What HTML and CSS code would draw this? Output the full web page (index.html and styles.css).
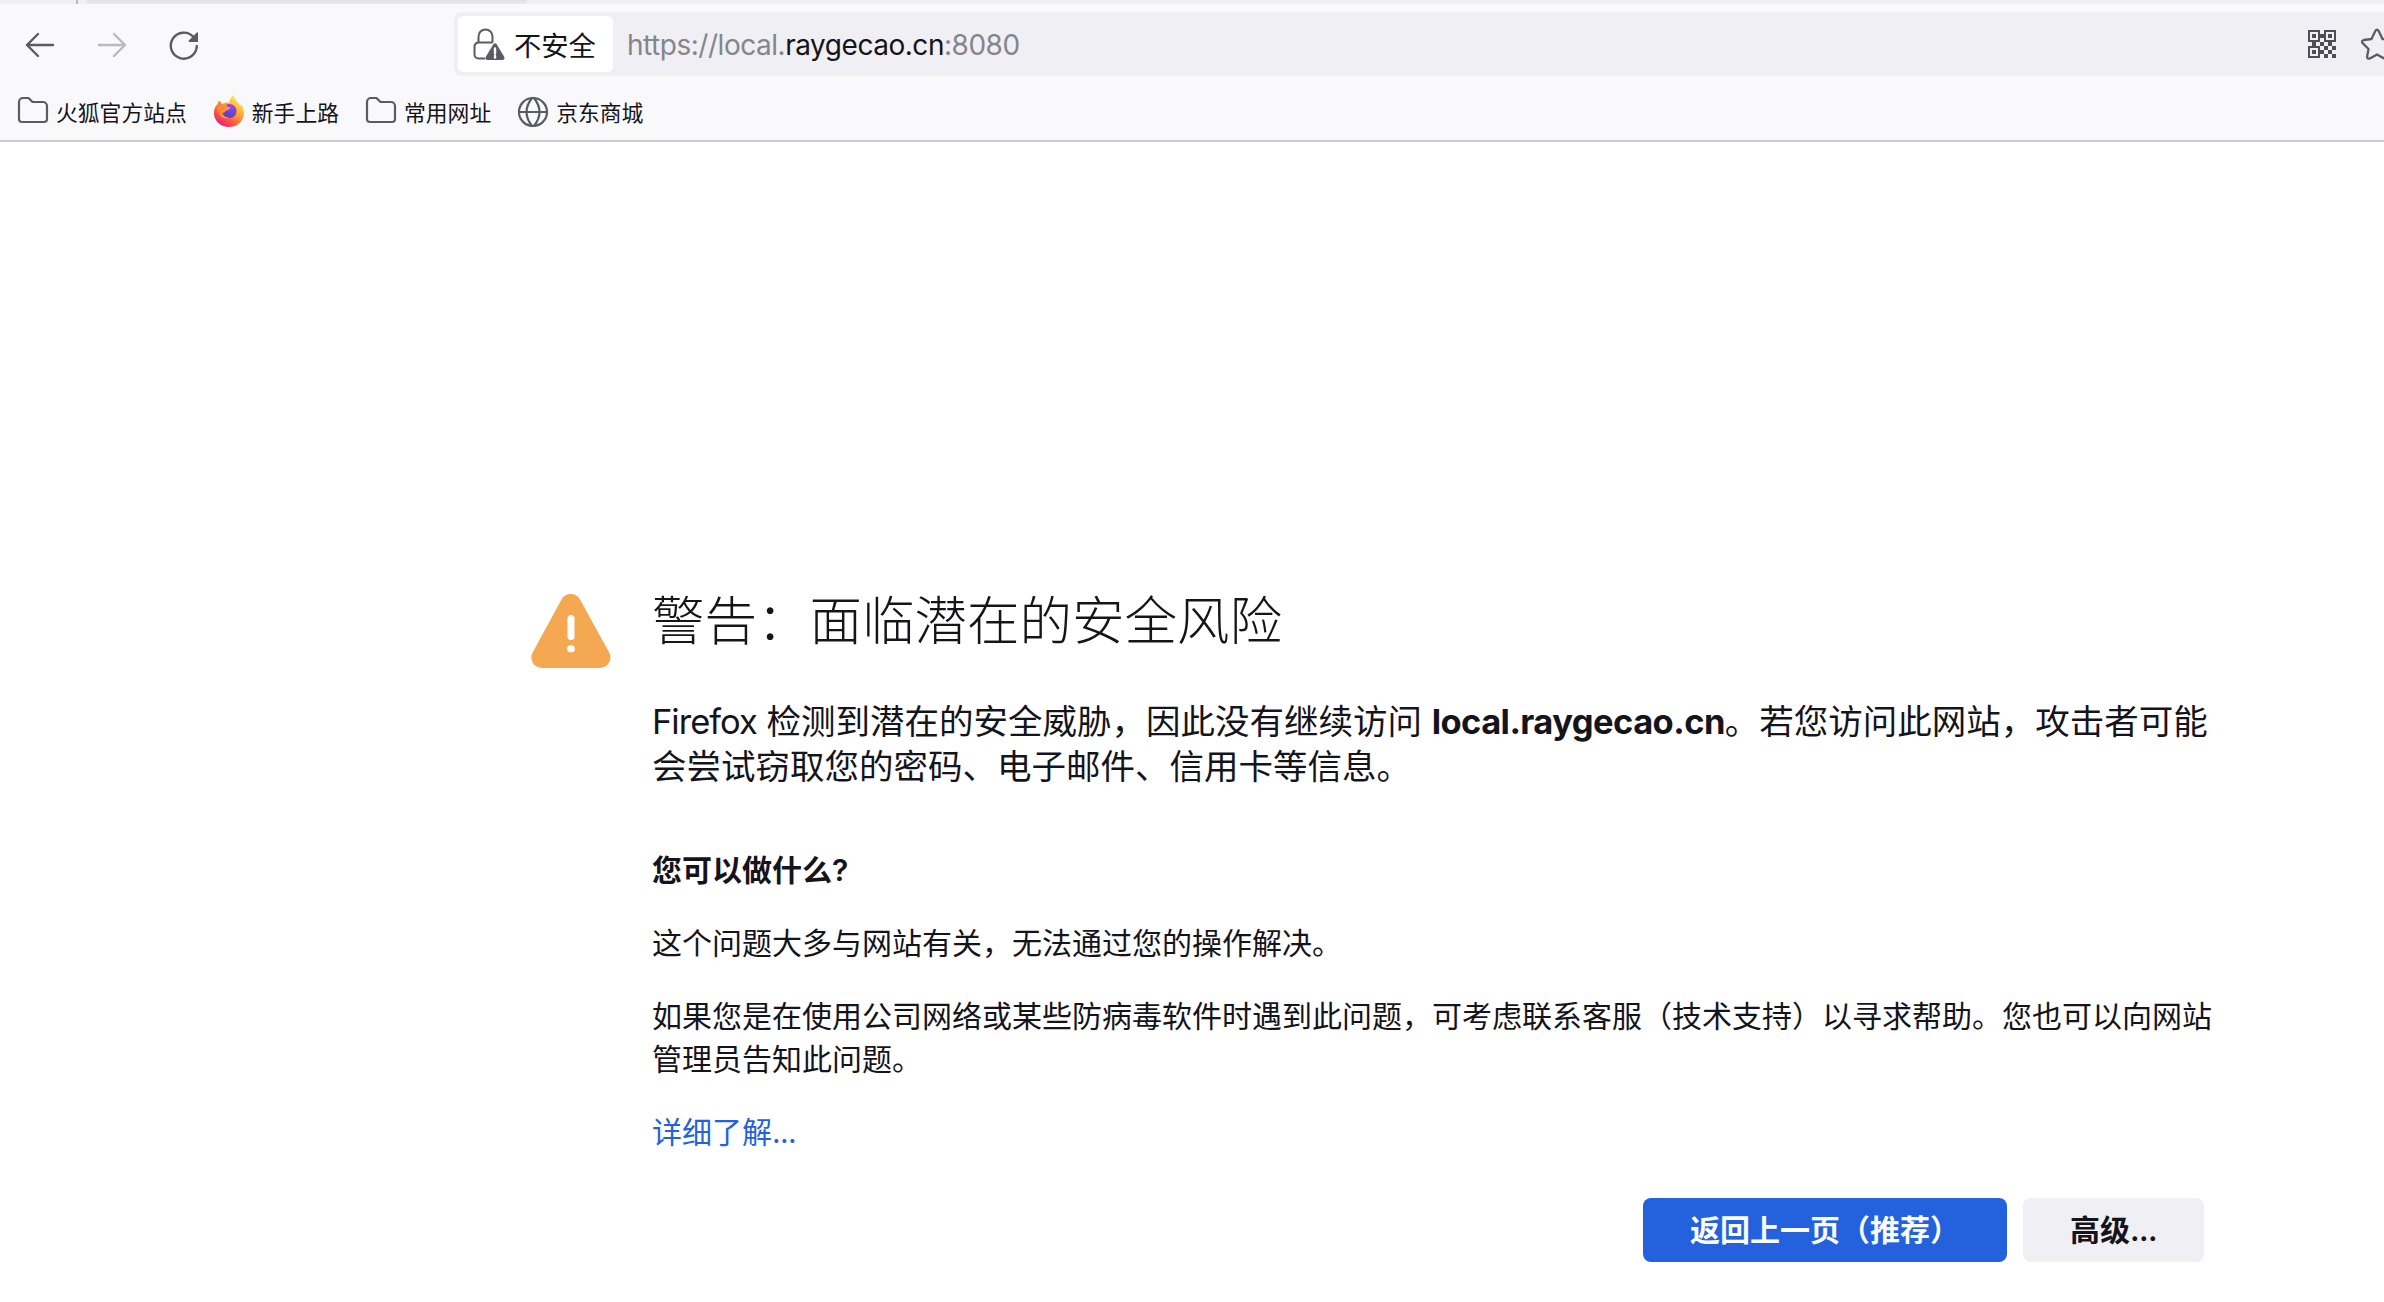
FILE: index.html
```html
<!DOCTYPE html>
<html lang="zh-CN">
<head>
<meta charset="utf-8">
<title>警告：面临潜在的安全风险</title>
<link rel="stylesheet" href="styles.css">
</head>
<body>
<header class="chrome">
  <div class="tabstrip"><span class="tab-separator"></span><span class="tab-shadow"></span></div>
  <div class="navbar">
    <div class="nav-buttons">
      <svg class="nav-icon" viewBox="0 0 32 32"><path d="M29 16H3M14 5L3 16l11 11"/></svg>
      <svg class="nav-icon disabled" viewBox="0 0 32 32"><path d="M3 16h26M18 5l11 11-11 11"/></svg>
      <svg class="nav-icon" viewBox="0 0 32 32"><path d="M28.8 17A13 13 0 1 1 25.5 8"/><path class="solid" d="M30 3.500V13H21.500Q20 12.500 20.800 11.500L28.800 3.500Q29.500 3 30 3.500Z"/></svg>
    </div>
    <div class="urlbar">
      <div class="identity">
        <svg class="lock-icon" viewBox="0 0 32 34"><path d="M5.500 15V9.500a7 7 0 0 1 14 0V15M11.500 31.500H5.500a4 4 0 0 1-4-4V19.500a4 4 0 0 1 4-4H19"/><path class="solid" d="M20.200 17.500q1.800-2.600 3.600 0L31 29.500q1.300 3-1.500 3.500h-15q-2.800-.5-1.500-3.500z"/><path class="mark" d="M22 21.500v5M22 29v1.500"/></svg>
        <span class="identity-label">不安全</span>
      </div>
      <div class="url">https://local.<span class="domain">raygecao.cn</span>:8080</div>
      <div class="page-actions">
        <svg class="qr-icon" viewBox="0 0 14 14"><path fill-rule="evenodd" d="M0 0h6v6H0zM1 1v4h4V1zM2 2h2v2H2zM8 0h6v6H8zM9 1v4h4V1zM10 2h2v2h-2zM0 8h6v6H0zM1 9v4h4V9zM2 10h2v2H2zM6 2h2v2H6zM2 6h2v2H2zM6 6h2v2H6zM10 6h2v2h-2zM8 8h2v2H8zM12 8h2v2h-2zM6 10h2v2H6zM10 10h2v2h-2zM8 12h2v2H8zM12 12h2v2h-2z"/></svg>
        <svg class="star-icon" viewBox="0 0 32 32"><path d="M14.300 3.100q1.700-3 3.400 0L21.500 11l7.700 1q3 .8 1 3.300L24.500 21l1.400 7.500q0 2.700-2.800 2L16 26.500 8.900 30.500q-2.800.7-2.800-2L7.500 21 1.800 15.300q-2-2.500 1-3.300l7.700-1z"/></svg>
      </div>
    </div>
  </div>
  <nav class="bookmarks">
    <a class="bookmark"><svg class="bm-icon" viewBox="0 0 32 32"><path d="M2 24V7a4 4 0 0 1 4-4h5.500L15.500 7H26a4 4 0 0 1 4 4v13a3 3 0 0 1-3 3H5a3 3 0 0 1-3-3z"/></svg>火狐官方站点</a>
    <a class="bookmark"><svg class="firefox-icon" viewBox="0 0 32 32">
      <defs>
        <linearGradient id="flame" x1=".85" y1=".1" x2=".25" y2="1"><stop offset="0" stop-color="#fff14f"/><stop offset=".4" stop-color="#ffa436"/><stop offset=".7" stop-color="#ff5a3d"/><stop offset="1" stop-color="#e31587"/></linearGradient>
        <radialGradient id="orb" cx=".65" cy=".15" r=".9"><stop offset="0" stop-color="#9a45ee"/><stop offset="1" stop-color="#4a45bd"/></radialGradient>
        <linearGradient id="fox" x1="0" y1="0" x2="1" y2="1"><stop offset="0" stop-color="#ff7a35"/><stop offset="1" stop-color="#ffa43a"/></linearGradient>
      </defs>
      <path fill="url(#flame)" d="M20.500 0c-3 3-4.500 5-4 8C14 7 11 8 9 9L6 5.500C5 7 4.500 8 4.500 9 1.500 12 1 15 1 18a15 14 0 0 0 30 0c0-4-2-7-3-9v2c-3-4-6.500-6-7.500-11z"/>
      <circle fill="url(#orb)" cx="16.500" cy="16" r="7"/>
      <path fill="url(#fox)" d="M4 11L6.500 6l3 4 4-.5c0 2 1.500 2.500 4 3-.5 2-3 2.500-5 3.500-1 2-3 2-4 1.500 1 4 5 5.500 8 4.500-7 4-13-3-12.500-11z"/>
    </svg>新手上路</a>
    <a class="bookmark"><svg class="bm-icon" viewBox="0 0 32 32"><path d="M2 24V7a4 4 0 0 1 4-4h5.500L15.500 7H26a4 4 0 0 1 4 4v13a3 3 0 0 1-3 3H5a3 3 0 0 1-3-3z"/></svg>常用网址</a>
    <a class="bookmark"><svg class="bm-icon" viewBox="0 0 32 32"><circle cx="16" cy="17" r="14"/><path d="M2 17h28M15 3q-11 14 0 28M17 3q11 14 0 28"/></svg>京东商城</a>
  </nav>
</header>
<main class="page">
  <svg class="warning-icon" viewBox="0 0 80 76"><path fill="#f4a851" d="M30.500 6.500a10.500 10.500 0 0 1 18.500 0L78.200 59.500a10.500 10.500 0 0 1-9.200 15.500H10.800a10.500 10.500 0 0 1-9.200-15.500z"/><rect fill="#fff" x="36.500" y="22" width="7" height="25" rx="3.500"/><rect fill="#fff" x="36.300" y="52.500" width="7.400" height="6.800" rx="2.500"/></svg>
  <div class="content">
    <h1>警告：面临潜在的安全风险</h1>
    <p class="intro"><span class="product">Firefox</span> 检测到潜在的安全威胁，因此没有继续访问 <b class="host">local.raygecao.cn</b>。若您访问此网站，攻击者可能<br>会尝试窃取您的密码、电子邮件、信用卡等信息。</p>
    <h2>您可以做什么?</h2>
    <p>这个问题大多与网站有关，无法通过您的操作解决。</p>
    <p>如果您是在使用公司网络或某些防病毒软件时遇到此问题，可考虑联系客服（技术支持）以寻求帮助。您也可以向网站<br>管理员告知此问题。</p>
    <p><a class="more">详细了解<span class="dots">...</span></a></p>
    <div class="actions">
      <button class="btn primary">返回上一页（推荐）</button>
      <button class="btn">高级<span class="dots">...</span></button>
    </div>
  </div>
</main>
</body>
</html>
```
FILE: styles.css
```css
* { box-sizing: border-box; }
body {
  margin: 0;
  height: 1302px;
  overflow: hidden;
  background: #fff;
  color: #15141a;
  font-family: Inter, "Noto Sans CJK SC", sans-serif;
  white-space: nowrap;
}
svg { display: block; flex: none; }

.chrome {
  height: 142px;
  background: #f9f9fb;
  border-bottom: 2px solid #ccc;
}
.tabstrip { display: flex; height: 4px; background: #f0f0f4; }
.tab-separator { width: 2px; margin-left: 76px; background: #bbbbc0; }
.tab-shadow { width: 440px; margin-left: 9px; background: linear-gradient(#e2e2e6, #ebebef); }

.navbar { display: flex; height: 80px; padding: 8px 0; }
.nav-buttons { display: flex; align-items: center; gap: 40px; width: 454px; padding: 2px 0 0 24px; }
.nav-icon { width: 32px; height: 32px; }
.nav-icon path, .lock-icon path, .star-icon path, .bm-icon path, .bm-icon circle {
  fill: none;
  stroke: #5b5b66;
  stroke-width: 2;
  stroke-linecap: round;
  stroke-linejoin: round;
}
.nav-icon path { stroke-width: 2.4; }
.nav-icon .solid { fill: #5b5b66; stroke: none; }
.nav-icon.disabled { opacity: .4; }

.urlbar {
  display: flex;
  align-items: center;
  flex: 1;
  height: 64px;
  padding-left: 4px;
  background: #f0f0f4;
  border-radius: 8px 0 0 8px;
}
.identity {
  display: flex;
  align-items: center;
  width: 155px;
  height: 56px;
  padding-left: 15px;
  background: #fff;
  border-radius: 6px;
}
.lock-icon { width: 32px; height: 34px; }
.lock-icon .solid { fill: #5b5b66; stroke: none; }
.lock-icon .mark { stroke: #fff; stroke-width: 2.4; }
.identity-label { margin-left: 9px; font-size: 27.3px; }
.url { margin-left: 14px; padding-top: 2px; font-size: 28px; letter-spacing: -.47px; color: #85858c; }
.domain { color: #15141a; }
.page-actions { display: flex; align-items: center; gap: 25px; margin: 0 -9px 0 auto; }
.qr-icon { width: 28px; height: 28px; fill: #4f4e58; }
.star-icon { width: 32px; height: 32px; }
.star-icon path { stroke-width: 2.3; }

.bookmarks { display: flex; gap: 26px; height: 56px; padding: 2px 0 0 17px; align-items: flex-start; }
.bookmark { display: flex; align-items: center; gap: 7px; height: 50px; font-size: 21.8px; }
.bm-icon, .firefox-icon { width: 32px; height: 32px; }
.bm-icon path, .bm-icon circle { stroke-width: 2.2; }

.page { display: flex; padding: 451px 0 0 531px; }
.warning-icon { width: 80px; height: 76px; }
.content { width: 1564px; margin-left: 41px; }
h1 { margin: 0; font-size: 52.5px; line-height: 56px; font-weight: 300; }
.intro { margin: 50px 0 59.5px; font-size: 34.5px; line-height: 45px; }
.product { letter-spacing: -1px; }
.host { letter-spacing: -.56px; }
h2 { margin: 0 0 30px; font-size: 30px; line-height: 43px; font-weight: 600; }
p { margin: 0 0 30px; font-size: 30px; line-height: 43px; }
.more { color: #2362dc; }
.dots { letter-spacing: -.6px; }
.actions { display: flex; justify-content: flex-end; gap: 16px; margin: 44.5px 12px 0 0; }
.btn {
  height: 64px;
  width: 181px;
  padding: 0 0 4px;
  border: 0;
  border-radius: 8px;
  background: #f0f0f4;
  color: #15141a;
  font: 600 30px Inter, "Noto Sans CJK SC", sans-serif;
}
.primary { width: 364px; background: #2362dc; color: #fbfbfe; }
```
